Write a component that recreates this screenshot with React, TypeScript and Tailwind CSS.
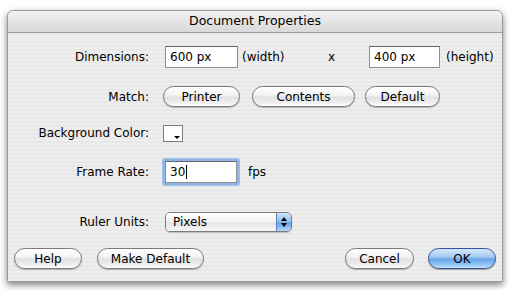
import React from 'react';

const font = "font-['DejaVu_Sans',sans-serif]";
const aquaBtn =
  'flex h-[21px] items-center justify-center rounded-full border border-[#7a7a7a] bg-[linear-gradient(180deg,#ffffff_0%,#f4f4f4_40%,#e2e2e2_55%,#f0f0f0_85%,#ffffff_100%)] text-[12px] text-black shadow-[0_1px_1px_rgba(0,0,0,0.25)]';
const okBtn =
  'flex h-[21px] items-center justify-center rounded-full border border-[#34549a] bg-[linear-gradient(180deg,#d4e7fb_0%,#a6cbf2_40%,#6aa6ea_55%,#8cc2f5_80%,#c6e3fd_100%)] text-[12px] text-black shadow-[0_1px_1px_rgba(0,0,0,0.3)]';
const field =
  'flex h-[22px] items-center border border-[#8e8e8e] border-t-[#666] bg-white pl-[4px] text-[12px] text-black';

function Label({ children }: { children: React.ReactNode }) {
  return <div className="w-[141px] shrink-0 text-right text-[12px] text-black">{children}</div>;
}

export default function App() {
  return (
    <div className={`h-[290px] w-[511px] bg-white pl-[7px] pt-[10px] ${font}`}>
      <div className="flex h-[272px] w-[496px] flex-col rounded-t-[6px] border border-[#9a9a9a] bg-[repeating-linear-gradient(180deg,#eeeeee_0px,#eeeeee_2px,#e8e8e8_2px,#e8e8e8_4px)] shadow-[0_3px_7px_rgba(0,0,0,0.5)]">
        <div className="flex h-[22px] shrink-0 items-center justify-center rounded-t-[6px] border-b border-[#9c9c9c] bg-[linear-gradient(180deg,#f4f4f4,#e4e4e4_50%,#d9d9d9)] text-[12.5px] text-black">
          Document Properties
        </div>

        <div className="mt-[13px] flex items-center">
          <Label>Dimensions:</Label>
          <div className={`${field} ml-[16px] w-[73px]`}>600 px</div>
          <span className="ml-[4px] w-[86px] text-[12px]">(width)</span>
          <span className="w-[41px] text-[12px]">x</span>
          <div className={`${field} w-[71px]`}>400 px</div>
          <span className="ml-[6px] text-[12px]">(height)</span>
        </div>

        <div className="mt-[18px] flex items-center">
          <Label>Match:</Label>
          <div className={`${aquaBtn} ml-[14px] w-[77px]`}>Printer</div>
          <div className={`${aquaBtn} ml-[12px] w-[103px]`}>Contents</div>
          <div className={`${aquaBtn} ml-[10px] w-[75px]`}>Default</div>
        </div>

        <div className="mt-[17px] flex items-center">
          <Label>Background Color:</Label>
          <div className="relative ml-[14px] h-[17px] w-[20px] border border-[#7d7d7d] bg-white">
            <span className="absolute bottom-[2px] right-[2px] h-0 w-0 border-x-[3px] border-t-[3px] border-x-transparent border-t-black" />
          </div>
        </div>

        <div className="mt-[17px] flex items-center">
          <Label>Frame Rate:</Label>
          <div className="ml-[14px] rounded-[2px] p-[2px] shadow-[0_0_0_1px_#9fbfe6] bg-[#8fb5e6]">
            <div className={`${field} h-[18px] w-[72px] border-[#6f8fb8]`}>
              30<span className="ml-[1px] h-[14px] w-px bg-black" />
            </div>
          </div>
          <span className="ml-[9px] text-[12px]">fps</span>
        </div>

        <div className="mt-[27px] flex items-center">
          <Label>Ruler Units:</Label>
          <div className="ml-[16px] flex h-[20px] w-[127px] overflow-hidden rounded-[5px] border border-[#7c7c7c] shadow-[0_1px_1px_rgba(0,0,0,0.2)]">
            <div className="flex flex-1 items-center bg-[linear-gradient(180deg,#ffffff,#f1f1f1_50%,#e4e4e4_55%,#f7f7f7)] pl-[7px] text-[12px]">Pixels</div>
            <div className="flex w-[15px] flex-col items-center justify-center gap-[2px] border-l border-[#5a7fb8] bg-[linear-gradient(180deg,#cfe4fa,#8dbdf0_50%,#5f9fe8_55%,#b5dafc)]">
              <span className="h-0 w-0 border-x-[3px] border-b-[4px] border-x-transparent border-b-black" />
              <span className="h-0 w-0 border-x-[3px] border-t-[4px] border-x-transparent border-t-black" />
            </div>
          </div>
        </div>

        <div className="mt-[16px] flex items-center px-[6px]">
          <div className={`${aquaBtn} w-[68px]`}>Help</div>
          <div className={`${aquaBtn} ml-[15px] w-[107px]`}>Make Default</div>
          <div className={`${aquaBtn} ml-auto w-[69px]`}>Cancel</div>
          <div className={`${okBtn} ml-[14px] w-[68px]`}>OK</div>
        </div>
      </div>
    </div>
  );
}
